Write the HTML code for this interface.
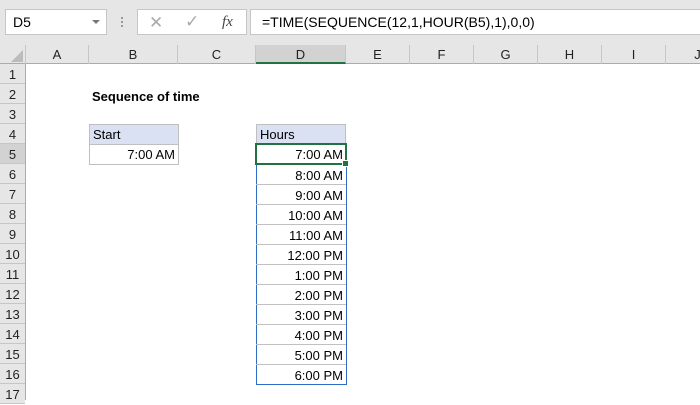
<!DOCTYPE html>
<html><head><style>
*{margin:0;padding:0;box-sizing:border-box}
body{width:700px;height:400px;overflow:hidden;background:#fff;font-family:"Liberation Sans",Calibri,sans-serif;font-size:13px;color:#000;position:relative}
.a{position:absolute}
.ch{position:absolute;top:45px;height:19px;border-right:1px solid #c6c6c6;text-align:center;line-height:20px;font-size:13px;color:#222}
.rh{position:absolute;left:0;width:25px;height:20px;border-bottom:1px solid #c6c6c6;text-align:center;line-height:21px;font-size:13px;color:#222;background:#e6e6e6}
.c{position:absolute;height:20px;line-height:21px;font-size:13px;padding:0 3px;white-space:nowrap}
.r{text-align:right}
</style></head><body>
<div class="a" style="left:0;top:0;width:700px;height:45px;background:#e6e6e6"></div>
<div class="a" style="left:5px;top:9px;width:102px;height:26px;background:#fff;border:1px solid #c6c6c6;padding-left:7px;line-height:25px;font-size:14px">D5</div>
<div class="a" style="left:92px;top:20px;width:0;height:0;border-left:4px solid transparent;border-right:4px solid transparent;border-top:4px solid #777"></div>
<div class="a" style="left:121px;top:17px;width:2px;height:2px;background:#999;box-shadow:0 4px #999,0 8px #999"></div>
<div class="a" style="left:137px;top:9px;width:110px;height:26px;background:#fff;border:1px solid #c6c6c6"></div>
<div class="a" style="left:149px;top:13px;font-size:17px;color:#aaa">✕</div>
<div class="a" style="left:185px;top:12px;font-size:17px;color:#aaa">✓</div>
<div class="a" style="left:222px;top:14px;font-size:15px;font-style:italic;font-family:'Liberation Serif',serif;color:#444">fx</div>
<div class="a" style="left:250px;top:9px;width:460px;height:26px;background:#fff;border:1px solid #c6c6c6;padding-left:11px;line-height:25px;font-size:14px">=TIME(SEQUENCE(12,1,HOUR(B5),1),0,0)</div>
<div class="a" style="left:0;top:45px;width:700px;height:19px;background:#e6e6e6;border-bottom:1px solid #ababab"></div>
<div class="a" style="left:0;top:45px;width:26px;height:19px;border-right:1px solid #c6c6c6"></div>
<div class="a" style="left:11px;top:50px;width:0;height:0;border-left:12px solid transparent;border-bottom:12px solid #bcbcbc"></div>
<div class="ch" style="left:26px;width:63px">A</div>
<div class="ch" style="left:89px;width:89px">B</div>
<div class="ch" style="left:178px;width:78px">C</div>
<div class="ch" style="left:256px;width:90px;background:#d2d2d2;border-bottom:2px solid #217346;height:19px">D</div>
<div class="ch" style="left:346px;width:64px">E</div>
<div class="ch" style="left:410px;width:64px">F</div>
<div class="ch" style="left:474px;width:64px">G</div>
<div class="ch" style="left:538px;width:64px">H</div>
<div class="ch" style="left:602px;width:64px">I</div>
<div class="ch" style="left:666px;width:64px">J</div>
<div class="a" style="left:25px;top:64px;width:1px;height:336px;background:#ababab"></div>
<div class="rh" style="top:64px">1</div><div class="rh" style="top:84px">2</div><div class="rh" style="top:104px">3</div><div class="rh" style="top:124px">4</div>
<div class="rh" style="top:144px;background:#d2d2d2">5</div><div class="rh" style="top:164px">6</div><div class="rh" style="top:184px">7</div><div class="rh" style="top:204px">8</div>
<div class="rh" style="top:224px">9</div><div class="rh" style="top:244px">10</div><div class="rh" style="top:264px">11</div><div class="rh" style="top:284px">12</div>
<div class="rh" style="top:304px">13</div><div class="rh" style="top:324px">14</div><div class="rh" style="top:344px">15</div><div class="rh" style="top:364px">16</div><div class="rh" style="top:384px">17</div>
<div class="c" style="left:89px;top:86px;font-weight:bold">Sequence of time</div>
<div class="c" style="left:89px;top:124px;width:90px;height:21px;background:#d9e1f2;border:1px solid #bfbfbf;line-height:20px">Start</div>
<div class="c r" style="left:89px;top:144px;width:90px;height:21px;border:1px solid #bfbfbf;line-height:20px">7:00 AM</div>
<div class="c" style="left:256px;top:124px;width:90px;height:21px;background:#d9e1f2;border:1px solid #bfbfbf;line-height:20px">Hours</div>
<div class="a" style="left:256px;top:144px;width:91px;height:241px;border:1px solid #2f6bc8"></div>
<div class="c r" style="left:256px;top:144px;width:90px">7:00 AM</div>
<div class="c r" style="left:256px;top:164px;width:90px;border-top:1px solid #c0c0c0">8:00 AM</div>
<div class="c r" style="left:256px;top:184px;width:90px;border-top:1px solid #c0c0c0">9:00 AM</div>
<div class="c r" style="left:256px;top:204px;width:90px;border-top:1px solid #c0c0c0">10:00 AM</div>
<div class="c r" style="left:256px;top:224px;width:90px;border-top:1px solid #c0c0c0">11:00 AM</div>
<div class="c r" style="left:256px;top:244px;width:90px;border-top:1px solid #c0c0c0">12:00 PM</div>
<div class="c r" style="left:256px;top:264px;width:90px;border-top:1px solid #c0c0c0">1:00 PM</div>
<div class="c r" style="left:256px;top:284px;width:90px;border-top:1px solid #c0c0c0">2:00 PM</div>
<div class="c r" style="left:256px;top:304px;width:90px;border-top:1px solid #c0c0c0">3:00 PM</div>
<div class="c r" style="left:256px;top:324px;width:90px;border-top:1px solid #c0c0c0">4:00 PM</div>
<div class="c r" style="left:256px;top:344px;width:90px;border-top:1px solid #c0c0c0">5:00 PM</div>
<div class="c r" style="left:256px;top:364px;width:90px;border-top:1px solid #c0c0c0">6:00 PM</div>
<div class="a" style="left:255px;top:143px;width:92px;height:22px;border:2px solid #217346"></div>
<div class="a" style="left:343px;top:161px;width:5px;height:5px;background:#217346;outline:1px solid #fff"></div>
</body></html>
